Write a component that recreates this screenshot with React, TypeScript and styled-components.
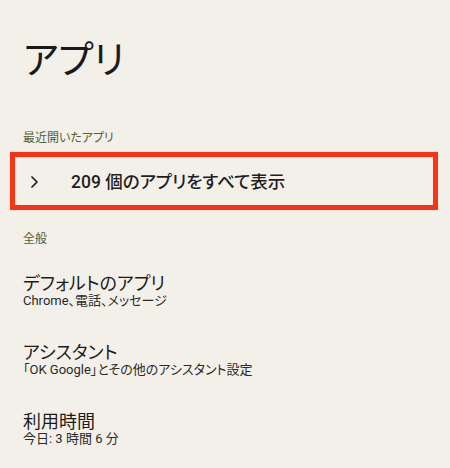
import styled, { createGlobalStyle } from "styled-components";

const GlobalStyle = createGlobalStyle`
  html, body {
    margin: 0;
    padding: 0;
    background: #f3f0e9;
  }
  body {
    font-family: Roboto, "Noto Sans CJK JP", sans-serif;
    font-feature-settings: "palt";
    color: #1c1c1c;
  }
`;

const Page = styled.div`
  width: 450px;
  height: 468px;
  overflow: hidden;
  background: #f3f0e9;
  display: flex;
  flex-direction: column;
`;

const Title = styled.h1`
  margin: 37px 0 0 23px;
  font-size: 38px;
  line-height: 46px;
  font-weight: 400;
  color: #1a1a1a;
`;

const SectionHeader = styled.div<{ $top: number }>`
  margin: ${(p) => p.$top}px 0 0 23px;
  font-size: 12px;
  line-height: 16px;
  color: #56602f;
`;

const HighlightRow = styled.div`
  margin: 6px 12px 0 10px;
  height: 58px;
  box-sizing: border-box;
  border: 5px solid #fb3214;
  padding: 13px 0 11px 16px;
  display: flex;
  align-items: center;
  gap: 33px;
`;

const Chevron = styled.svg`
  width: 7px;
  height: 12px;
  flex: none;
`;

const RowLabel = styled.span`
  font-size: 17.5px;
  line-height: 24px;
  font-weight: 500;
  color: #1f1f1f;
`;

const List = styled.div`
  margin: 27px 0 0 23px;
  display: flex;
  flex-direction: column;
  gap: 34px;
`;

const Item = styled.div`
  display: flex;
  flex-direction: column;
`;

const ItemTitle = styled.div`
  font-size: 18px;
  line-height: 19px;
  color: #1c1c1c;
`;

const ItemSub = styled.div`
  font-size: 13px;
  line-height: 16px;
  color: #2a2a2a;
`;

const items = [
  { title: "デフォルトのアプリ", sub: "Chrome、電話、メッセージ" },
  { title: "アシスタント", sub: "「OK Google」とその他のアシスタント設定" },
  { title: "利用時間", sub: "今日: 3 時間 6 分" },
];

export default function App() {
  return (
    <Page>
      <GlobalStyle />
      <Title>アプリ</Title>

      <SectionHeader $top={47}>最近開いたアプリ</SectionHeader>
      <HighlightRow>
        <Chevron viewBox="0 0 7 12" fill="none">
          <path
            d="M1 1 L6 6 L1 11"
            stroke="#1f1f1f"
            strokeWidth="1.7"
            strokeLinecap="round"
            strokeLinejoin="round"
          />
        </Chevron>
        <RowLabel>209 個のアプリをすべて表示</RowLabel>
      </HighlightRow>

      <SectionHeader $top={21}>全般</SectionHeader>
      <List>
        {items.map((it) => (
          <Item key={it.title}>
            <ItemTitle>{it.title}</ItemTitle>
            <ItemSub>{it.sub}</ItemSub>
          </Item>
        ))}
      </List>
    </Page>
  );
}
